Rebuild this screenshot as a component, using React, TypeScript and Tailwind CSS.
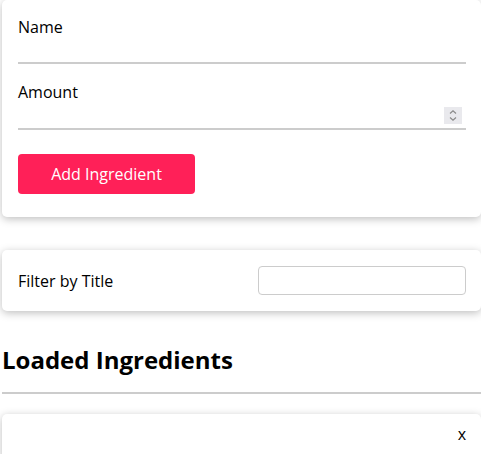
import React from 'react';

const cardClass = 'ml-[2px] w-[479px] rounded-[5px] bg-white shadow-[0_2px_8px_rgba(0,0,0,0.26)]';

const App = () => {
  return (
    <div className="min-h-[454px] overflow-hidden bg-white text-black font-['Open_Sans',sans-serif]">
      {/* Ingredient form */}
      <section className={`${cardClass} pl-4 pr-[15px] pt-[15px] pb-[23px]`}>
        <div>
          <label className="block text-base leading-6">Name</label>
          <input type="text" className="block h-[25px] w-full border-b-2 border-[#ccc] outline-none" />
        </div>
        <div className="mt-[16px]">
          <label className="block text-base leading-6">Amount</label>
          <div className="relative">
            <input
              type="number"
              className="block h-[26px] w-full border-b-2 border-[#ccc] outline-none [appearance:textfield] [&::-webkit-inner-spin-button]:appearance-none"
            />
            {/* spin buttons */}
            <div className="absolute right-[4px] top-[3px] flex h-[17px] w-[18px] items-center justify-center bg-[#e9e9ed]">
              <svg width="10" height="13" viewBox="0 0 10 13" fill="none" stroke="#8a8a8a" strokeWidth="1.2">
                <path d="M2 4.5 L5 1.8 L8 4.5" />
                <path d="M2 8.5 L5 11.2 L8 8.5" />
              </svg>
            </div>
          </div>
        </div>
        <button className="mt-[24px] h-10 w-[177px] rounded-[4px] bg-[#ff2058] text-base text-white">
          Add Ingredient
        </button>
      </section>

      {/* Search */}
      <section className={`${cardClass} mt-[33px] flex h-[61px] items-center justify-between pl-4 pr-[15px]`}>
        <label className="text-base leading-6">Filter by Title</label>
        <input type="text" className="h-[29px] w-[208px] rounded-[4px] border border-[#ccc] outline-none" />
      </section>

      {/* List */}
      <h2 className="ml-[2px] mt-[33px] text-2xl font-bold leading-8">Loaded Ingredients</h2>
      <div className="ml-[2px] mt-[16px] h-[2px] w-[479px] bg-[#ccc]"></div>
      <ul className="mt-[20px]">
        <li className={`${cardClass} pt-2 pb-4 pr-[15px] text-right text-base leading-6`}>x</li>
      </ul>
    </div>
  );
};

export default App;
